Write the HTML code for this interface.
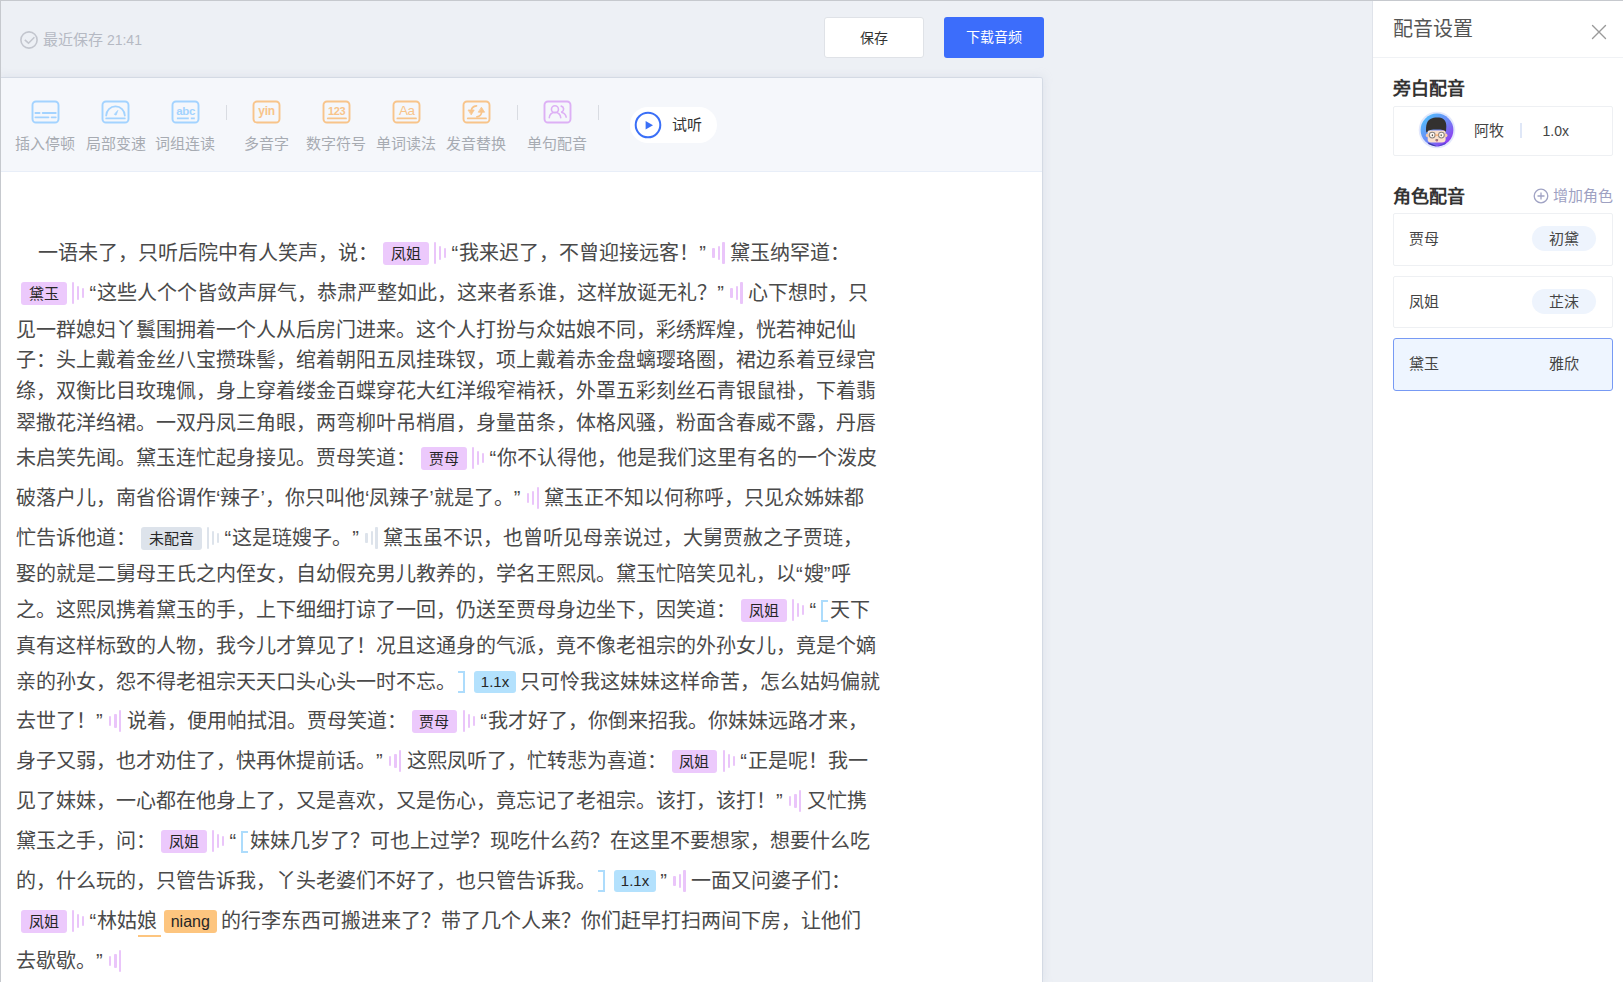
<!DOCTYPE html>
<html lang="zh-CN">
<head>
<meta charset="utf-8">
<style>
*{box-sizing:border-box;margin:0;padding:0}
html,body{width:1623px;height:982px;overflow:hidden}
body{position:relative;background:#edf0f5;font-family:"Liberation Sans",sans-serif;color:#333}
.abs{position:absolute}
#topline{left:0;top:0;width:1623px;height:1px;background:#c6c9ce}
#leftline{left:0;top:0;width:1px;height:982px;background:#c6c9ce}
#saved{left:20px;top:30px;height:20px;font-size:14px;color:#b5b9c3;line-height:20px;white-space:nowrap}
#saved svg{position:absolute;left:0;top:1px}
#saved span{position:absolute;left:23px;top:0}
.btn{position:absolute;top:17px;height:41px;width:100px;border-radius:3px;font-size:14px;line-height:41px;text-align:center}
#bsave{left:824px;background:#fff;border:1px solid #dfe2e7;color:#333}
#bdl{left:944px;background:#3c6dfb;color:#fff}
#card{left:0;top:78px;width:1042px;height:904px;background:#fff;border-radius:2px 2px 0 0;box-shadow:0 0 0 1px rgba(205,212,224,.7),0 0 10px 1px rgba(190,198,215,.35)}
#toolbar{position:absolute;left:0;top:0;width:1042px;height:94px;background:#f5f7fb;border-bottom:1px solid #e8eef8;border-radius:2px 2px 0 0}
.ic{position:absolute;top:22px}
.lbl{position:absolute;top:55.5px;width:80px;text-align:center;font-size:15px;line-height:20px;color:#a7abb2;white-space:nowrap}
.sep{position:absolute;top:27px;width:1px;height:15px;background:#d9dce2}
#play{position:absolute;left:629.5px;top:28.5px;width:87px;height:36px;border-radius:18px;background:#fff}
#play span{position:absolute;left:42px;top:8px;font-size:15px;line-height:20px;color:#333}
.ln{position:absolute;left:16px;white-space:nowrap;text-spacing-trim:space-all;font-size:20px;line-height:30px;height:30px;color:#4a4a4a}
.tg{display:inline-block;vertical-align:top;height:23px;line-height:23px;font-size:15px;padding:0 7.75px;border-radius:3px;color:#262626;margin:3.5px 0 0 5px;background:#ecc9fc}
.tg.gr{background:#dde3eb}
.tg.sp{background:#b3e1fd;font-family:"Liberation Sans",sans-serif;height:22px;line-height:22px;margin:3.8px 4px 0 8.4px;padding:0 7.05px}
.tg.py{background:#fdc57f;font-family:"Liberation Sans",sans-serif;font-size:16px;padding:0 7.05px;margin:3.5px 4.5px 0 6.5px}
.wv{display:inline-block;vertical-align:top;width:13px;height:30px;position:relative;margin:0 4.5px 0 5.5px}
.wv i{position:absolute;width:2.3px;background:#eac5fa;border-radius:1px}
.wv i:nth-child(1){left:0;top:3.9px;height:22.2px}
.wv i:nth-child(2){left:5.2px;top:7.6px;height:14.4px}
.wv i:nth-child(3){left:10px;top:10.2px;height:9.6px}
.wv.e i:nth-child(1){left:0;top:10.2px;height:9.6px}
.wv.e i:nth-child(3){left:10px;top:3.9px;height:22.2px}
.wv.g i{background:#dde3eb}
.brl,.brr{display:inline-block;vertical-align:top;width:7px;height:22.2px;margin-top:4.6px;border:2.4px solid #addcfc}
.brl{border-right:none;margin:4.6px 2.6px 0 3.5px}
.brr{border-left:none;margin:4.2px 0 0 2.4px}
.dq{letter-spacing:1px}
.ul{display:inline-block;vertical-align:top;position:relative}
.ul::after{content:"";position:absolute;left:0.8px;top:29px;width:22.7px;height:2px;background:#fdc57f}
.ph{position:absolute;left:20px;top:15px;font-size:20px;line-height:26px;color:#555;white-space:nowrap}
.px{position:absolute;left:218px;top:23px}
.pdiv{position:absolute;left:0;top:55.5px;width:251px;height:1.5px;background:#f0f2f5}
.psec{position:absolute;left:20px;font-size:18px;line-height:22px;font-weight:bold;color:#333;white-space:nowrap}
.pcard{position:absolute;left:20px;width:220px;border:1px solid #eef0f3;border-radius:2px;background:#fff}
.pcard.sel{border:1.6px solid #779af4;background:#eef5ff;border-radius:3px}
.av{position:absolute;left:24.3px;top:4.2px}
.pn{position:absolute;font-size:15px;line-height:20px;color:#444;white-space:nowrap}
.pvs{position:absolute;left:126px;top:16px;width:1.5px;height:15px;background:#dfe7f7}
.padd{position:absolute;left:160px;top:186px;width:90px;height:18px;font-size:15px;line-height:18px;color:#9ea1c2;white-space:nowrap}
.padd span{position:absolute;left:20px;top:0}
.pill{position:absolute;left:138px;top:12px;width:64px;height:25px;border-radius:12.5px;background:#eef4fd;font-size:15px;line-height:25px;text-align:center;color:#444}
.pill.np{background:transparent}
#panel{left:1372px;top:1px;width:251px;height:981px;background:#fff;border-left:1px solid #dfe3ea}
</style>
</head>
<body>
<div class="abs" id="saved"><svg width="18" height="18" viewBox="0 0 18 18"><circle cx="9" cy="9" r="8.1" fill="none" stroke="#c3c6ce" stroke-width="1.6"/><path d="M4.8 8.9l3.7 3.3 5.9-5.9" fill="none" stroke="#c3c6ce" stroke-width="1.6"/></svg><span><b style="font-weight:normal;font-size:15px">最近保存</b> 21:41</span></div>
<div class="btn" id="bsave">保存</div>
<div class="btn" id="bdl">下载音频</div>
<div class="abs" id="card">
<div id="toolbar"><svg class="ic" style="left:30.950000000000003px" width="29" height="24" viewBox="0 0 29 24" fill="none" stroke="#a3d3ff" stroke-width="1.8" stroke-linecap="round"><rect x="1.5" y="1.5" width="26" height="21" rx="3.5" stroke-width="1.9"/><path d="M4.4 13H8.6M11.7 13H24.8M4.4 17.3H17.5M20.6 17.3H24.8"/></svg><div class="lbl" style="left:5.450000000000003px">插入停顿</div><svg class="ic" style="left:101.0px" width="29" height="24" viewBox="0 0 29 24" fill="none" stroke="#a3d3ff" stroke-width="1.8" stroke-linecap="round"><rect x="1.5" y="1.5" width="26" height="21" rx="3.5" stroke-width="1.9"/><path d="M5.2 15.6A9.3 9.3 0 0 1 23.8 15.6"/><path d="M13.6 14.2Q14.2 12.6 17 10.2Q15.9 13.4 15.3 14.9Q14.3 15.6 13.6 14.2Z" fill="#a3d3ff" stroke-width="0.6"/><path d="M5.2 18.4H23.8"/></svg><div class="lbl" style="left:75.5px">局部变速</div><svg class="ic" style="left:170.85px" width="29" height="24" viewBox="0 0 29 24" fill="none" stroke="#a3d3ff" stroke-width="1.8" stroke-linecap="round"><rect x="1.5" y="1.5" width="26" height="21" rx="3.5" stroke-width="1.9"/><text x="14.6" y="15.3" text-anchor="middle" font-family="Liberation Sans" font-weight="bold" font-size="11.5" fill="#a3d3ff" stroke="none" letter-spacing="-0.3">abc</text><path d="M5.9 18.4H17.8M19.8 18.4H23.8" stroke-linecap="butt"/></svg><div class="lbl" style="left:145.35px">词组连读</div><svg class="ic" style="left:251.85000000000002px" width="29" height="24" viewBox="0 0 29 24" fill="none" stroke="#f8c48a" stroke-width="1.8" stroke-linecap="round"><rect x="1.5" y="1.5" width="26" height="21" rx="3.5" stroke-width="1.9"/><text x="14.6" y="15.3" text-anchor="middle" font-family="Liberation Sans" font-weight="bold" font-size="12" fill="#f8c48a" stroke="none" letter-spacing="-0.2">yin</text></svg><div class="lbl" style="left:226.35000000000002px">多音字</div><svg class="ic" style="left:321.65px" width="29" height="24" viewBox="0 0 29 24" fill="none" stroke="#f8c48a" stroke-width="1.8" stroke-linecap="round"><rect x="1.5" y="1.5" width="26" height="21" rx="3.5" stroke-width="1.9"/><text x="14.7" y="15.3" text-anchor="middle" font-family="Liberation Sans" font-weight="bold" font-size="11" fill="#f8c48a" stroke="none" letter-spacing="-0.3">123</text><path d="M5.8 18.4H24"/></svg><div class="lbl" style="left:296.15px">数字符号</div><svg class="ic" style="left:391.85px" width="29" height="24" viewBox="0 0 29 24" fill="none" stroke="#f8c48a" stroke-width="1.8" stroke-linecap="round"><rect x="1.5" y="1.5" width="26" height="21" rx="3.5" stroke-width="1.9"/><text x="14.8" y="15.3" text-anchor="middle" font-family="Liberation Sans" font-size="13.5" fill="#f8c48a" stroke="none" letter-spacing="-0.5">Aa</text><path d="M5.4 18.4H24"/></svg><div class="lbl" style="left:366.35px">单词读法</div><svg class="ic" style="left:461.65px" width="29" height="24" viewBox="0 0 29 24" fill="none" stroke="#f8c48a" stroke-width="1.8" stroke-linecap="round"><rect x="1.5" y="1.5" width="26" height="21" rx="3.5" stroke-width="1.9"/><path d="M14.5 5.8Q9.6 6.3 9.4 10.5" stroke-width="1.7"/><path d="M6.4 10H12.2L9.4 14.6Z" fill="#f8c48a" stroke-width="0.8" stroke-linejoin="round"/><path d="M14.9 16.8Q19.4 16.2 19.6 12" stroke-width="1.7"/><path d="M16.6 12.2H22.6L19.6 7.5Z" fill="#f8c48a" stroke-width="0.8" stroke-linejoin="round"/><path d="M5.8 18.4H24"/></svg><div class="lbl" style="left:436.15px">发音替换</div><svg class="ic" style="left:542.85px" width="29" height="24" viewBox="0 0 29 24" fill="none" stroke="#ddb0f5" stroke-width="1.8" stroke-linecap="round"><rect x="1.5" y="1.5" width="26" height="21" rx="3.5" stroke-width="1.9"/><circle cx="11.95" cy="9.2" r="3.5" stroke-width="1.6"/><path d="M6.25 17.8A5.75 5.6 0 0 1 17.75 17.8" stroke-width="1.6"/><path d="M18.25 6.1A3.1 3.1 0 0 1 18.65 12" stroke-width="1.6"/><path d="M18.95 12.5Q22.6 13.5 23.15 17.2" stroke-width="1.6"/></svg><div class="lbl" style="left:517.35px">单句配音</div><div class="sep" style="left:225.5px"></div><div class="sep" style="left:517px"></div><div class="sep" style="left:598px"></div><div id="play"><svg width="28" height="28" viewBox="0 0 28 28" style="position:absolute;left:4.5px;top:4.5px"><circle cx="14" cy="14" r="12.3" fill="none" stroke="#3a6ff7" stroke-width="2"/><path d="M11.6 10.1L19 14.3 11.6 18.6Z" fill="#3a6ff7"/></svg><span>试听</span></div></div>
</div>
<div class="abs" id="lines">
<div class="ln" style="top:238px"><span style="margin-left:22px"></span>一语未了，只听后院中有人笑声，说：<span class="tg ">凤姐</span><span class="wv"><i></i><i></i><i></i></span><span class="dq">“</span>我来迟了，不曾迎接远客！<span class="dq">”</span><span class="wv e"><i></i><i></i><i></i></span>黛玉纳罕道：</div>
<div class="ln" style="top:278px"><span class="tg f">黛玉</span><span class="wv"><i></i><i></i><i></i></span><span class="dq">“</span>这些人个个皆敛声屏气，恭肃严整如此，这来者系谁，这样放诞无礼？<span class="dq">”</span><span class="wv e"><i></i><i></i><i></i></span>心下想时，只</div>
<div class="ln" style="top:315px">见一群媳妇丫鬟围拥着一个人从后房门进来。这个人打扮与众姑娘不同，彩绣辉煌，恍若神妃仙</div>
<div class="ln" style="top:345px">子：头上戴着金丝八宝攒珠髻，绾着朝阳五凤挂珠钗，项上戴着赤金盘螭璎珞圈，裙边系着豆绿宫</div>
<div class="ln" style="top:376px">绦，双衡比目玫瑰佩，身上穿着缕金百蝶穿花大红洋缎窄褃袄，外罩五彩刻丝石青银鼠褂，下着翡</div>
<div class="ln" style="top:408px">翠撒花洋绉裙。一双丹凤三角眼，两弯柳叶吊梢眉，身量苗条，体格风骚，粉面含春威不露，丹唇</div>
<div class="ln" style="top:443px">未启笑先闻。黛玉连忙起身接见。贾母笑道：<span class="tg ">贾母</span><span class="wv"><i></i><i></i><i></i></span><span class="dq">“</span>你不认得他，他是我们这里有名的一个泼皮</div>
<div class="ln" style="top:483px">破落户儿，南省俗谓作‘辣子’，你只叫他‘凤辣子’就是了。<span class="dq">”</span><span class="wv e"><i></i><i></i><i></i></span>黛玉正不知以何称呼，只见众姊妹都</div>
<div class="ln" style="top:523px">忙告诉他道：<span class="tg gr">未配音</span><span class="wv g"><i></i><i></i><i></i></span><span class="dq">“</span>这是琏嫂子。<span class="dq">”</span><span class="wv g e"><i></i><i></i><i></i></span>黛玉虽不识，也曾听见母亲说过，大舅贾赦之子贾琏，</div>
<div class="ln" style="top:559px">娶的就是二舅母王氏之内侄女，自幼假充男儿教养的，学名王熙凤。黛玉忙陪笑见礼，以<span class="dq">“</span>嫂<span class="dq">”</span>呼</div>
<div class="ln" style="top:595px">之。这熙凤携着黛玉的手，上下细细打谅了一回，仍送至贾母身边坐下，因笑道：<span class="tg ">凤姐</span><span class="wv"><i></i><i></i><i></i></span><span class="dq">“</span><span class="brl"></span>天下</div>
<div class="ln" style="top:631px">真有这样标致的人物，我今儿才算见了！况且这通身的气派，竟不像老祖宗的外孙女儿，竟是个嫡</div>
<div class="ln" style="top:667px">亲的孙女，怨不得老祖宗天天口头心头一时不忘。<span class="brr"></span><span class="tg sp">1.1x</span>只可怜我这妹妹这样命苦，怎么姑妈偏就</div>
<div class="ln" style="top:706px">去世了！<span class="dq">”</span><span class="wv e"><i></i><i></i><i></i></span>说着，便用帕拭泪。贾母笑道：<span class="tg ">贾母</span><span class="wv"><i></i><i></i><i></i></span><span class="dq">“</span>我才好了，你倒来招我。你妹妹远路才来，</div>
<div class="ln" style="top:746px">身子又弱，也才劝住了，快再休提前话。<span class="dq">”</span><span class="wv e"><i></i><i></i><i></i></span>这熙凤听了，忙转悲为喜道：<span class="tg ">凤姐</span><span class="wv"><i></i><i></i><i></i></span><span class="dq">“</span>正是呢！我一</div>
<div class="ln" style="top:786px">见了妹妹，一心都在他身上了，又是喜欢，又是伤心，竟忘记了老祖宗。该打，该打！<span class="dq">”</span><span class="wv e"><i></i><i></i><i></i></span>又忙携</div>
<div class="ln" style="top:826px">黛玉之手，问：<span class="tg ">凤姐</span><span class="wv"><i></i><i></i><i></i></span><span class="dq">“</span><span class="brl"></span>妹妹几岁了？可也上过学？现吃什么药？在这里不要想家，想要什么吃</div>
<div class="ln" style="top:866px">的，什么玩的，只管告诉我，丫头老婆们不好了，也只管告诉我。<span class="brr"></span><span class="tg sp">1.1x</span><span class="dq">”</span><span class="wv e"><i></i><i></i><i></i></span>一面又问婆子们：</div>
<div class="ln" style="top:906px"><span class="tg f">凤姐</span><span class="wv"><i></i><i></i><i></i></span><span class="dq">“</span>林姑<span class="ul">娘</span><span class="tg py">niang</span>的行李东西可搬进来了？带了几个人来？你们赶早打扫两间下房，让他们</div>
<div class="ln" style="top:946px">去歇歇。<span class="dq">”</span><span class="wv e"><i></i><i></i><i></i></span></div>
</div>
<div class="abs" id="panel"><div class="ph">配音设置</div><svg class="px" width="16" height="16" viewBox="0 0 16 16"><path d="M1.5 1.5L14.5 14.5M14.5 1.5L1.5 14.5" stroke="#9a9a9a" stroke-width="1.4" stroke-linecap="round"/></svg><div class="pdiv"></div><div class="psec" style="top:77px">旁白配音</div><div class="pcard" style="top:105px;height:50px"><svg class="av" width="38" height="38" viewBox="0 0 38 38"><defs><linearGradient id="ag" x1="0.2" y1="0.1" x2="0.9" y2="0.8"><stop offset="0" stop-color="#55b8fb"/><stop offset="0.55" stop-color="#6f86f6"/><stop offset="1" stop-color="#8d3ff0"/></linearGradient><clipPath id="ac"><circle cx="19" cy="19" r="16.4"/></clipPath></defs><circle cx="19" cy="19" r="18.3" fill="#e3e8fc"/><circle cx="19" cy="19" r="16.4" fill="url(#ag)"/><g clip-path="url(#ac)"><path d="M10.5 31.5L18.4 35L18.4 40L8 40Z" fill="#3b3aa8"/><path d="M27.5 31.5L19.6 35L19.6 40L30 40Z" fill="#5a46d6"/><path d="M9.7 19.5H27.6V28.5Q27.6 31.5 24 31.5H13Q9.7 31.5 9.7 28.5Z" fill="#fbe0cc"/><ellipse cx="9.3" cy="24.3" rx="1.4" ry="1.9" fill="#f6c9a8"/><ellipse cx="28" cy="24.3" rx="1.4" ry="1.9" fill="#f6c9a8"/><path d="M8.2 21.5C7.6 14 9 9.5 13 7.8C15 6.6 18 6.4 21 6.6C25.5 7 28.5 10 28.3 15.5L28 21C26.5 19 24 18.6 19 18.6C13.5 18.6 10.5 19 9.6 20.8Z" fill="#333130"/><circle cx="14.2" cy="24.1" r="2.9" fill="#fff8f0" stroke="#8b8580" stroke-width="1.1"/><circle cx="23.4" cy="24.1" r="2.9" fill="#fff8f0" stroke="#8b8580" stroke-width="1.1"/><path d="M17.1 24.1H20.5" stroke="#f3a86a" stroke-width="1.2"/><ellipse cx="14.4" cy="24.3" rx="0.7" ry="1" fill="#555"/><ellipse cx="23.2" cy="24.3" rx="0.7" ry="1" fill="#555"/><path d="M17.4 28.6Q18.8 27.8 20.2 28.6L19.9 30.1Q18.8 30.6 17.7 30.1Z" fill="#6b5560"/><path d="M17.8 29.6Q18.8 29.2 19.8 29.6L19.6 30.3Q18.8 30.7 18 30.3Z" fill="#f08a96"/></g></svg><span class="pn" style="left:80px;top:13.5px">阿牧</span><i class="pvs"></i><span class="pn" style="left:148.5px;top:13.5px;font-size:14px;font-family:Liberation Sans">1.0x</span></div><div class="psec" style="top:185px">角色配音</div><div class="padd"><svg width="16" height="16" viewBox="0 0 16 16" style="position:absolute;left:0;top:1px"><circle cx="8" cy="8" r="6.8" fill="none" stroke="#a0a3c4" stroke-width="1.3"/><path d="M8 4.5V11.5M4.5 8H11.5" stroke="#a0a3c4" stroke-width="1.3"/></svg><span>增加角色</span></div><div class="pcard" style="top:212px;height:53px"><span class="pn" style="left:15px;top:14.5px">贾母</span><span class="pill">初黛</span></div><div class="pcard" style="top:275px;height:52px"><span class="pn" style="left:15px;top:14.5px">凤姐</span><span class="pill">芷沫</span></div><div class="pcard sel" style="top:337px;height:53px"><span class="pn" style="left:15px;top:14.5px">黛玉</span><span class="pill np">雅欣</span></div></div>
<div class="abs" id="topline"></div>
<div class="abs" id="leftline"></div>
</body>
</html>
